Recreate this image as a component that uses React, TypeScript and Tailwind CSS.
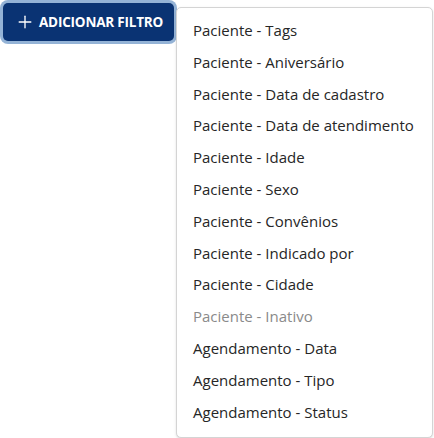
import { Plus } from "lucide-react";

const items = [
  { label: "Paciente - Tags" },
  { label: "Paciente - Aniversário" },
  { label: "Paciente - Data de cadastro" },
  { label: "Paciente - Data de atendimento" },
  { label: "Paciente - Idade" },
  { label: "Paciente - Sexo" },
  { label: "Paciente - Convênios" },
  { label: "Paciente - Indicado por" },
  { label: "Paciente - Cidade" },
  { label: "Paciente - Inativo", disabled: true },
  { label: "Agendamento - Data" },
  { label: "Agendamento - Tipo" },
  { label: "Agendamento - Status" },
];

export default function App() {
  return (
    <div
      className="relative h-[438px] w-[434px] bg-white"
      style={{ fontFamily: '"Open Sans", "Noto Sans", sans-serif' }}
    >
      <button className="ml-[3px] mt-[3px] flex h-[38px] w-[171px] items-center gap-[4px] rounded-[5px] bg-[#0a3373] pl-[12px] text-[13.5px] font-bold tracking-[-0.2px] text-white ring-[3px] ring-[#94b3d6]">
        <Plus size={20} strokeWidth={1.6} />
        ADICIONAR FILTRO
      </button>

      <div className="absolute left-[176px] top-[4px] w-[257px] rounded-[5px] border border-[#d4d4d4] bg-white pt-[7px] pb-[9px] shadow-sm">
        {items.map((item) => (
          <div
            key={item.label}
            className={`px-[16px] text-[15px] leading-[31.8px] ${
              item.disabled ? "text-[#8a8a8a]" : "text-[#262626]"
            }`}
          >
            {item.label}
          </div>
        ))}
      </div>
    </div>
  );
}
